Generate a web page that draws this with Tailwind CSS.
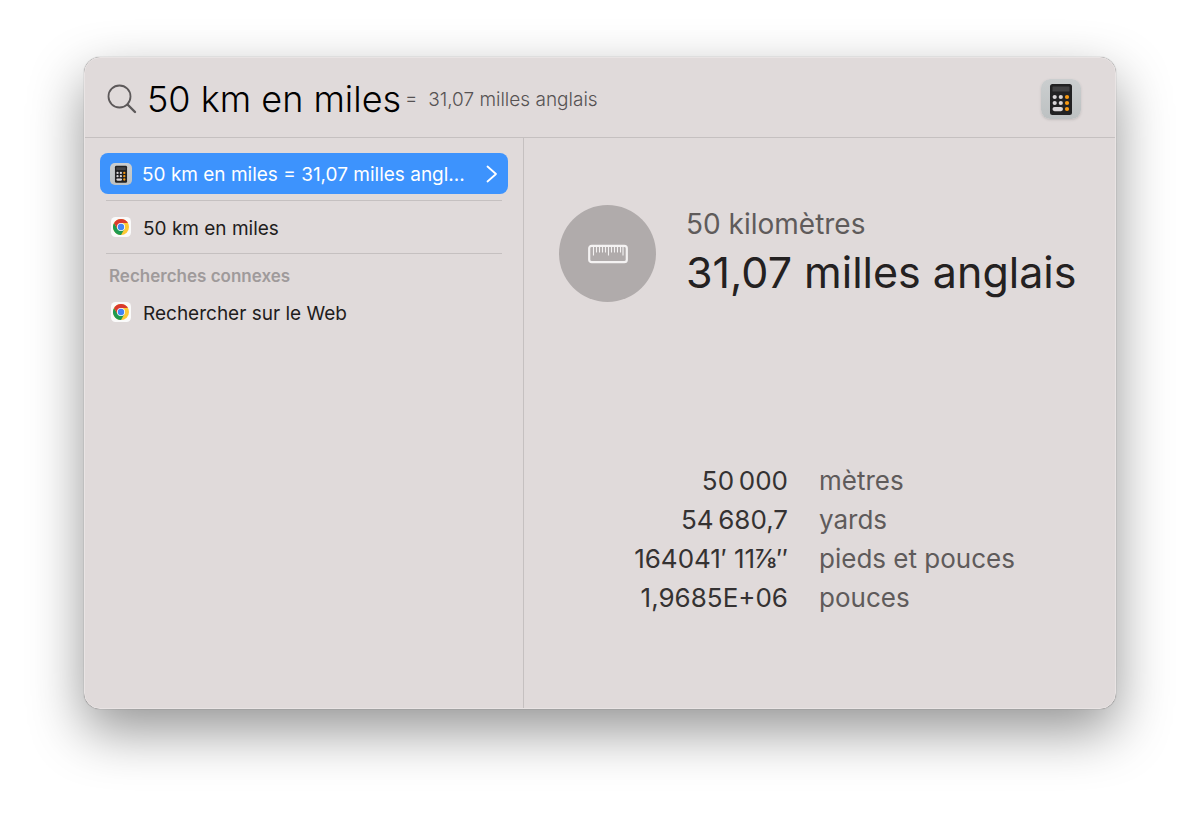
<!DOCTYPE html>
<html lang="fr">
  <head>
    <meta charset="UTF-8" />
    <meta name="viewport" content="width=device-width, initial-scale=1.0" />
    <title>50 km en miles</title>
    <script src="https://cdn.jsdelivr.net/npm/@tailwindcss/browser@4"></script>
  </head>
  <body class="flex min-h-screen bg-white px-[84px] pt-[57px] pb-[112px] font-[Inter,'Liberation_Sans',sans-serif]">
    <!-- Shared icons -->
    <svg class="absolute size-0" aria-hidden="true">
      <defs>
        <linearGradient id="calc-tile" x1="0" y1="0" x2="0" y2="1">
          <stop offset="0" stop-color="#cbcecf" />
          <stop offset="1" stop-color="#bdc1c2" />
        </linearGradient>
      </defs>
      <symbol id="calculator" viewBox="0 0 40 40">
        <rect width="40" height="40" rx="9" fill="url(#calc-tile)" />
        <rect x="9" y="5" width="22" height="31" rx="2.5" fill="#222223" />
        <rect x="11.5" y="7.5" width="17" height="5" rx="0.5" fill="#434344" />
        <g fill="#d9d6d8">
          <circle cx="13.7" cy="18" r="2.1" />
          <circle cx="19.8" cy="18" r="2.1" />
          <circle cx="13.7" cy="24" r="2.1" />
          <circle cx="19.8" cy="24" r="2.1" />
          <rect x="11.5" y="28" width="10.5" height="4.2" rx="2.1" />
        </g>
        <g fill="#f89a12">
          <circle cx="26" cy="18" r="2.1" />
          <circle cx="26" cy="24" r="2.1" />
          <circle cx="26" cy="30" r="2.1" />
        </g>
      </symbol>
      <symbol id="chrome" viewBox="0 0 20 20">
        <rect width="20" height="20" rx="4.5" fill="#fafafa" />
        <circle cx="10" cy="10" r="8" fill="#fcc934" />
        <path d="M10 10 L3.07 6 A8 8 0 0 1 16.93 6 H10 Z" fill="#d93a2f" />
        <path d="M10 10 L13.46 12 L10 18 A8 8 0 0 1 3.07 6 L6.54 12 Z" fill="#1e9a50" />
        <path d="M3.07 6 L6.54 12 L10 10 V6 Z" fill="#d93a2f" />
        <circle cx="10" cy="10" r="4" fill="#fff" />
        <circle cx="10" cy="10" r="3.2" fill="#4285f4" />
      </symbol>
    </svg>

    <main class="flex flex-1 flex-col overflow-hidden rounded-2xl border border-[#e9e4e4] bg-[#e0dada] shadow-[0_0_1px_rgba(0,0,0,0.5),0_22px_54px_rgba(0,0,0,0.42)]">
      <!-- Search bar -->
      <header class="flex h-20 items-center border-b border-[#c5c0c0] pt-0.5 pr-[34px] pl-[22px]">
        <svg class="size-8 shrink-0" viewBox="0 0 32 32" fill="none" stroke="#5d595a" stroke-linecap="round">
          <circle cx="12.5" cy="13.5" r="11" stroke-width="1.8" />
          <path d="M20.5 21.5 L28 29" stroke-width="2.4" />
        </svg>
        <input
          type="text"
          aria-label="Recherche"
          value="50 km en miles"
          class="ml-2 field-sizing-content bg-transparent text-[36px] font-light text-black outline-none"
        />
        <span class="mt-1 ml-1 flex-1 text-[19px] font-light text-[#565253]">=&nbsp; 31,07 milles anglais</span>
        <svg class="size-10 rounded-[9px] shadow-sm"><use href="#calculator" /></svg>
      </header>

      <div class="flex flex-1">
        <!-- Results -->
        <nav class="w-[439px] shrink-0 border-r border-[#c5c0c0] p-[15px] text-[19px] text-[#1f1d1d]">
          <a href="#" class="flex h-[41px] items-center rounded-lg bg-[#3d93fd] px-2.5 text-white">
            <svg class="mr-2.5 size-[22px] shrink-0"><use href="#calculator" /></svg>
            <span class="mt-1 whitespace-nowrap">50 km en miles = 31,07 milles angl...</span>
            <svg class="ml-auto h-5 w-3 shrink-0" viewBox="0 0 12 20" fill="none" stroke="#fff" stroke-width="1.8" stroke-linecap="round" stroke-linejoin="round">
              <path d="M1.500 2.5 L10 10 L1.500 17.5" />
            </svg>
          </a>
          <div class="mx-1.5 mt-1.5 border-y border-[#c5c0c0]">
            <a href="#" class="flex h-[52px] items-center px-[5px]">
              <svg class="mr-3 size-5 shrink-0"><use href="#chrome" /></svg>
              <span class="mt-1">50 km en miles</span>
            </a>
          </div>
          <h2 class="mt-3 ml-[9px] text-[17px] leading-5 font-semibold text-[#9f9a9b]">Recherches connexes</h2>
          <a href="#" class="mt-1.5 ml-1.5 flex h-10 items-center px-[5px]">
            <svg class="mr-3 size-5 shrink-0"><use href="#chrome" /></svg>
            <span class="mt-1">Rechercher sur le Web</span>
          </a>
        </nav>

        <!-- Preview -->
        <section class="flex-1 px-[35px] pt-[67px]">
          <div class="flex items-center">
            <div class="flex size-[97px] shrink-0 items-center justify-center rounded-full bg-[#b0abab]">
              <svg class="h-5 w-10" viewBox="0 0 40 20" fill="none" stroke="#f4f2f2">
                <rect x="1.2" y="1.8" width="37.6" height="16.4" rx="2.5" stroke-width="2.2" />
                <path d="M8.5 3 V8.5 M11.5 3 V8.5 M14.5 3 V8.5 M17.5 3 V8.5 M23.5 3 V8.5 M26.5 3 V8.5 M29.5 3 V8.5 M32.5 3 V8.5 M5.5 3 V11.5 M20.5 3 V11.5 M35 3 V11.5" stroke-width="1.1" />
              </svg>
            </div>
            <div class="ml-[30px] whitespace-nowrap">
              <p class="text-[28px] leading-9 text-[#5f5b5b]">50 kilomètres</p>
              <h1 class="text-[43px] leading-[60px] text-[#242121]">31,07 milles anglais</h1>
            </div>
          </div>
          <table class="mt-[159px] text-[26px] leading-[39px]">
            <tbody>
              <tr>
                <td class="w-[229px] p-0 text-right text-[#353232]">50&thinsp;000</td>
                <th scope="row" class="pl-[31px] text-left font-normal text-[#5f5b5b]">mètres</th>
              </tr>
              <tr>
                <td class="p-0 text-right text-[#353232]">54&thinsp;680,7</td>
                <th scope="row" class="pl-[31px] text-left font-normal text-[#5f5b5b]">yards</th>
              </tr>
              <tr>
                <td class="p-0 text-right text-[#353232]">164041′ 11⅞″</td>
                <th scope="row" class="pl-[31px] text-left font-normal text-[#5f5b5b]">pieds et pouces</th>
              </tr>
              <tr>
                <td class="p-0 text-right text-[#353232]">1,9685E+06</td>
                <th scope="row" class="pl-[31px] text-left font-normal text-[#5f5b5b]">pouces</th>
              </tr>
            </tbody>
          </table>
        </section>
      </div>
    </main>
  </body>
</html>
